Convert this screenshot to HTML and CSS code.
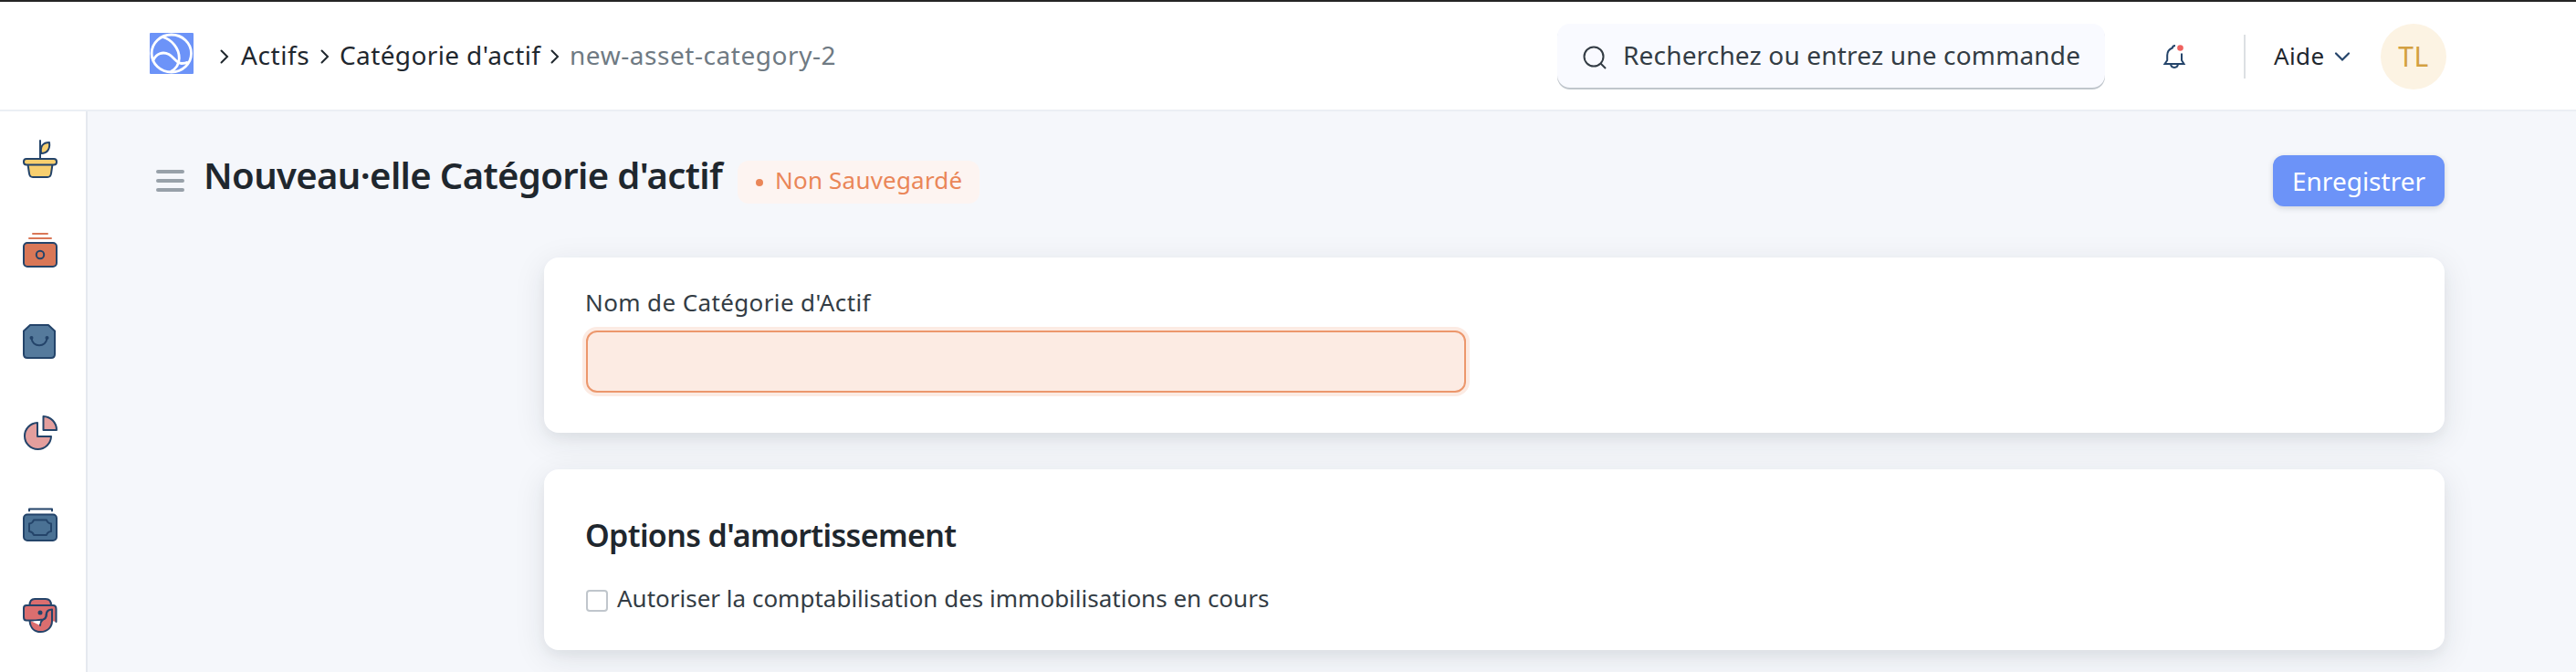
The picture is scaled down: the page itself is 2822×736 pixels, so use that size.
FILE: index.html
```html
<!DOCTYPE html>
<html lang="fr">
<head>
<meta charset="utf-8">
<title>Nouveau·elle Catégorie d'actif</title>
<link rel="stylesheet" href="styles.css">
</head>
<body>
<header class="navbar">
  <svg class="logo" viewBox="0 0 48 45"><rect width="48" height="45" rx="1" fill="#6c93f8"/><g fill="none" stroke="#fff" stroke-width="2.800"><ellipse cx="23.800" cy="22.500" rx="21.700" ry="20.500"/><path d="M14 4.500C24 7 32.500 17 32.300 28C32 35 28 40 23 42.500"/><path d="M4 30C7 23 14 20 21 23.500C27 27 29 33 35 33.500C38 33.500 40 33 42 32"/></g></svg>
  <nav class="crumbs">
    <svg class="sep" viewBox="0 0 10 16"><path d="M1.500 1.500L8 8L1.500 14.500"/></svg><a class="t-c1">Actifs</a>
    <svg class="sep" viewBox="0 0 10 16"><path d="M1.500 1.500L8 8L1.500 14.500"/></svg><a class="t-c2">Catégorie d'actif</a>
    <svg class="sep" viewBox="0 0 10 16"><path d="M1.500 1.500L8 8L1.500 14.500"/></svg><a class="t-c3">new-asset-category-2</a>
  </nav>
  <div class="search">
    <svg viewBox="0 0 26 26"><circle cx="12" cy="12" r="10.500"/><path d="M19.500 19.500L25 25"/></svg>
    <span class="t-search">Recherchez ou entrez une commande</span>
  </div>
  <svg class="bell" viewBox="0 0 24 28"><path d="M13 2C11 2 10 3 9.800 4.500C6 6 4.200 9 4.200 12.500V18L1.500 22H22.500L20 18V10.500M8 22.500C8.500 27 15.500 27 16 22.500"/><circle cx="18.500" cy="4.500" r="3.300"/></svg>
  <i class="divider"></i>
  <span class="help">Aide</span>
  <svg class="down" viewBox="0 0 16 10"><path d="M1 1.500L8 8.500L15 1.500"/></svg>
  <span class="avatar">TL</span>
</header>
<div class="shell">
  <aside class="sidebar">
    <svg viewBox="0 0 38 42"><g fill="#f7cf6f"><path d="M20 15C19 7 22 3 29 3C30 10 27 15 20 15Z"/><path d="M5.500 27L7 37Q7.500 41 11 41H27Q30.500 41 31 37L32.500 27Z"/><rect x="1" y="21" width="36" height="6.500" rx="3"/></g><path d="M19 1V21"/></svg>
    <svg viewBox="0 0 38 38"><path d="M11 1H27M7 6H31" stroke="#d97757"/><rect x="1" y="11" width="36" height="26" rx="4" fill="#d97757"/><circle cx="19" cy="24" r="4.200"/></svg>
    <svg viewBox="0 0 38 38"><path d="M8 1H28L35 7.500V33Q35 37 31 37H5Q1 37 1 33V7.500Z" fill="#557a9c"/><path d="M9.500 15C10 26 26 26 26.500 15"/><circle cx="9.500" cy="15" r="1" /><circle cx="26.500" cy="15" r="1"/></svg>
    <svg viewBox="0 0 38 38"><g fill="#e39e9d"><path d="M16 8A14.500 14.500 0 1 0 31 23H16Z"/><path d="M22.500 1V16H37A15 15 0 0 0 22.500 1Z"/></g></svg>
    <svg viewBox="0 0 38 38"><path d="M7 4.500V2.500H32V4.500"/><rect x="1" y="8.500" width="36" height="28.500" rx="4" fill="#4a7194"/><path d="M12 14.500H26Q27 18 31 18.500V27Q27 27.500 26 31H12Q11 27.500 7 27V18.500Q11 18 12 14.500Z"/></svg>
    <svg viewBox="0 0 38 38"><g fill="#db6e6f"><path d="M7.500 24.500C8 33 13 37 19.500 37C27 37 32 32 32 25V12C28 12 26 15 26 18C26 22 24 23 22 23.500C19 26 19 28 19 30"/><path d="M36.500 26V12Q36.500 8 33 8H31Q31 1 25 1H13Q7.500 1 7.500 8H4Q1 8 1 11V21Q1 24.500 4 24.500H14L22 23.500C24 23 25.500 21 25.500 18C26 14 28 12.500 32 12.500V25" /></g><path d="M8 8H31"/><path d="M11 25.500L18 25L19 28Z" fill="#fff" stroke="none"/><circle cx="19" cy="16" r="1.500" fill="#24446a"/></svg>
  </aside>
  <main class="main">
    <div class="head">
      <div class="burger"><i></i><i></i><i></i></div>
      <h1 class="title">Nouveau·elle Catégorie d'actif</h1>
      <div class="badge"><i></i><span>Non Sauvegardé</span></div>
      <button class="save"><span>Enregistrer</span></button>
    </div>
    <section class="card name-card">
      <label class="label" for="name">Nom de Catégorie d'Actif</label>
      <input class="field" id="name" type="text">
    </section>
    <section class="card options-card">
      <h2 class="subtitle">Options d'amortissement</h2>
      <label class="check"><input type="checkbox"><span>Autoriser la comptabilisation des immobilisations en cours</span></label>
    </section>
  </main>
</div>
</body>
</html>
```
FILE: styles.css
```css
* { box-sizing: border-box; }
body { margin: 0; width: 2822px; height: 736px; overflow: hidden; background: #f5f7fb; color: #1f272e; font: 26px/36px "Noto Sans", sans-serif; display: flex; flex-direction: column; }
svg { display: block; flex: none; fill: none; overflow: visible; }
span, a, h1, h2, label { white-space: nowrap; }

.navbar { height: 122px; flex: none; display: flex; align-items: flex-start; padding: 24px 142px 0 164px; background: #fff; border-top: 2px solid #252525; border-bottom: 2px solid #ebeff4; }
.logo { width: 48px; height: 45px; margin-top: 10px; }
.crumbs { display: flex; margin: 16px 0 0 29px; font-size: 28px; }
.sep { width: 10px; height: 16px; margin: 12px 13px 0 0; stroke: #1f272e; stroke-width: 2; stroke-linecap: round; }
.t-c1 { width: 87px; letter-spacing: .6px; }
.t-c2 { width: 231px; margin-left: -2px; letter-spacing: .38px; }
.t-c3 { color: #6f7a83; letter-spacing: .55px; margin-left: -2px; }
.search { width: 600px; height: 70px; margin-left: auto; display: flex; padding: 16px 0 0 28px; border-radius: 14px; background: #f9faff; box-shadow: 0 2px 0 #c0c6cc; }
.search svg { width: 26px; height: 26px; margin: 8px 18px 0 0; stroke: #333c44; stroke-width: 2; }
.t-search { color: #333c44; font-size: 28px; letter-spacing: .17px; }
.bell { width: 24px; height: 28px; margin: 22px 0 0 64px; stroke: #24446a; stroke-width: 2; }
.bell circle { fill: #f0625f; stroke: none; }
.divider { width: 2px; height: 48px; margin: 12px 31px 0 64px; background: #dce0e3; }
.help { width: 67px; margin-top: 17px; letter-spacing: .4px; }
.down { width: 16px; height: 10px; margin-top: 31px; stroke: #24446a; stroke-width: 2.2; stroke-linecap: round; }
.avatar { width: 72px; height: 72px; margin-left: 34px; border-radius: 50%; background: #fcf3e3; color: #d3a041; font-size: 30px; line-height: 71px; letter-spacing: .5px; text-align: center; }

.shell { flex: 1; display: flex; }
.sidebar { width: 96px; flex: none; padding: 31px 0 0 25px; display: flex; flex-direction: column; background: #fff; border-right: 2px solid #e5e9ef; }
.sidebar svg { width: 38px; height: 38px; margin-bottom: 62px; stroke: #24446a; stroke-width: 2; stroke-linejoin: round; stroke-linecap: round; }
.sidebar svg:first-child { height: 42px; margin-bottom: 60px; }

.main { width: 2582px; padding: 48px 0 0 74px; }
.head { height: 112px; display: flex; align-items: flex-start; }
.burger { width: 31px; margin: 16px 21px 0 1px; display: grid; gap: 6px; }
.burger i { height: 4px; border-radius: 2px; background: #98a1a9; }
.title { width: 585px; margin: -6px 0 0; font-size: 40px; line-height: 56px; font-weight: 600; letter-spacing: -.63px; }
.badge { width: 265px; height: 47px; margin-top: 6px; padding: 4px 0 0 20px; display: flex; border-radius: 12px; background: #fdf4f1; color: #ea8658; line-height: 34px; letter-spacing: .2px; }
.badge i { width: 8px; height: 8px; margin: 16px 13px 0 0; border-radius: 50%; background: #ea8658; }
.save { width: 188px; height: 56px; margin-left: auto; padding: 0; border: 0; border-radius: 12px; background: #6c93f8; color: #fff; font: inherit; font-size: 28px; box-shadow: 0 2px 6px rgba(25, 39, 52, .16); }

.card { width: 2082px; margin-left: 426px; padding: 0 46px; border-radius: 16px; background: #fff; box-shadow: 0 8px 34px rgba(25, 39, 52, .10), 0 6px 12px rgba(25, 39, 52, .04); }
.name-card { height: 192px; margin-bottom: 40px; padding-top: 31px; }
.options-card { height: 198px; padding-top: 47px; }
.label { display: block; margin-left: -1px; height: 49px; color: #333c44; letter-spacing: .38px; }
.field { display: block; width: 964px; height: 68px; border: 2px solid #ec976c; border-radius: 12px; background: #fcebe3; box-shadow: 0 0 0 4px #fcebe3; }
.subtitle { margin: 0 0 26px -1px; font-size: 34px; line-height: 50px; font-weight: 600; letter-spacing: -.65px; }
.check { display: flex; color: #333c44; }
.check input { appearance: none; width: 24px; height: 24px; margin: 9px 10px 0 0; border: 2px solid #c0c6cc; border-radius: 4px; background: #fff; }
```
